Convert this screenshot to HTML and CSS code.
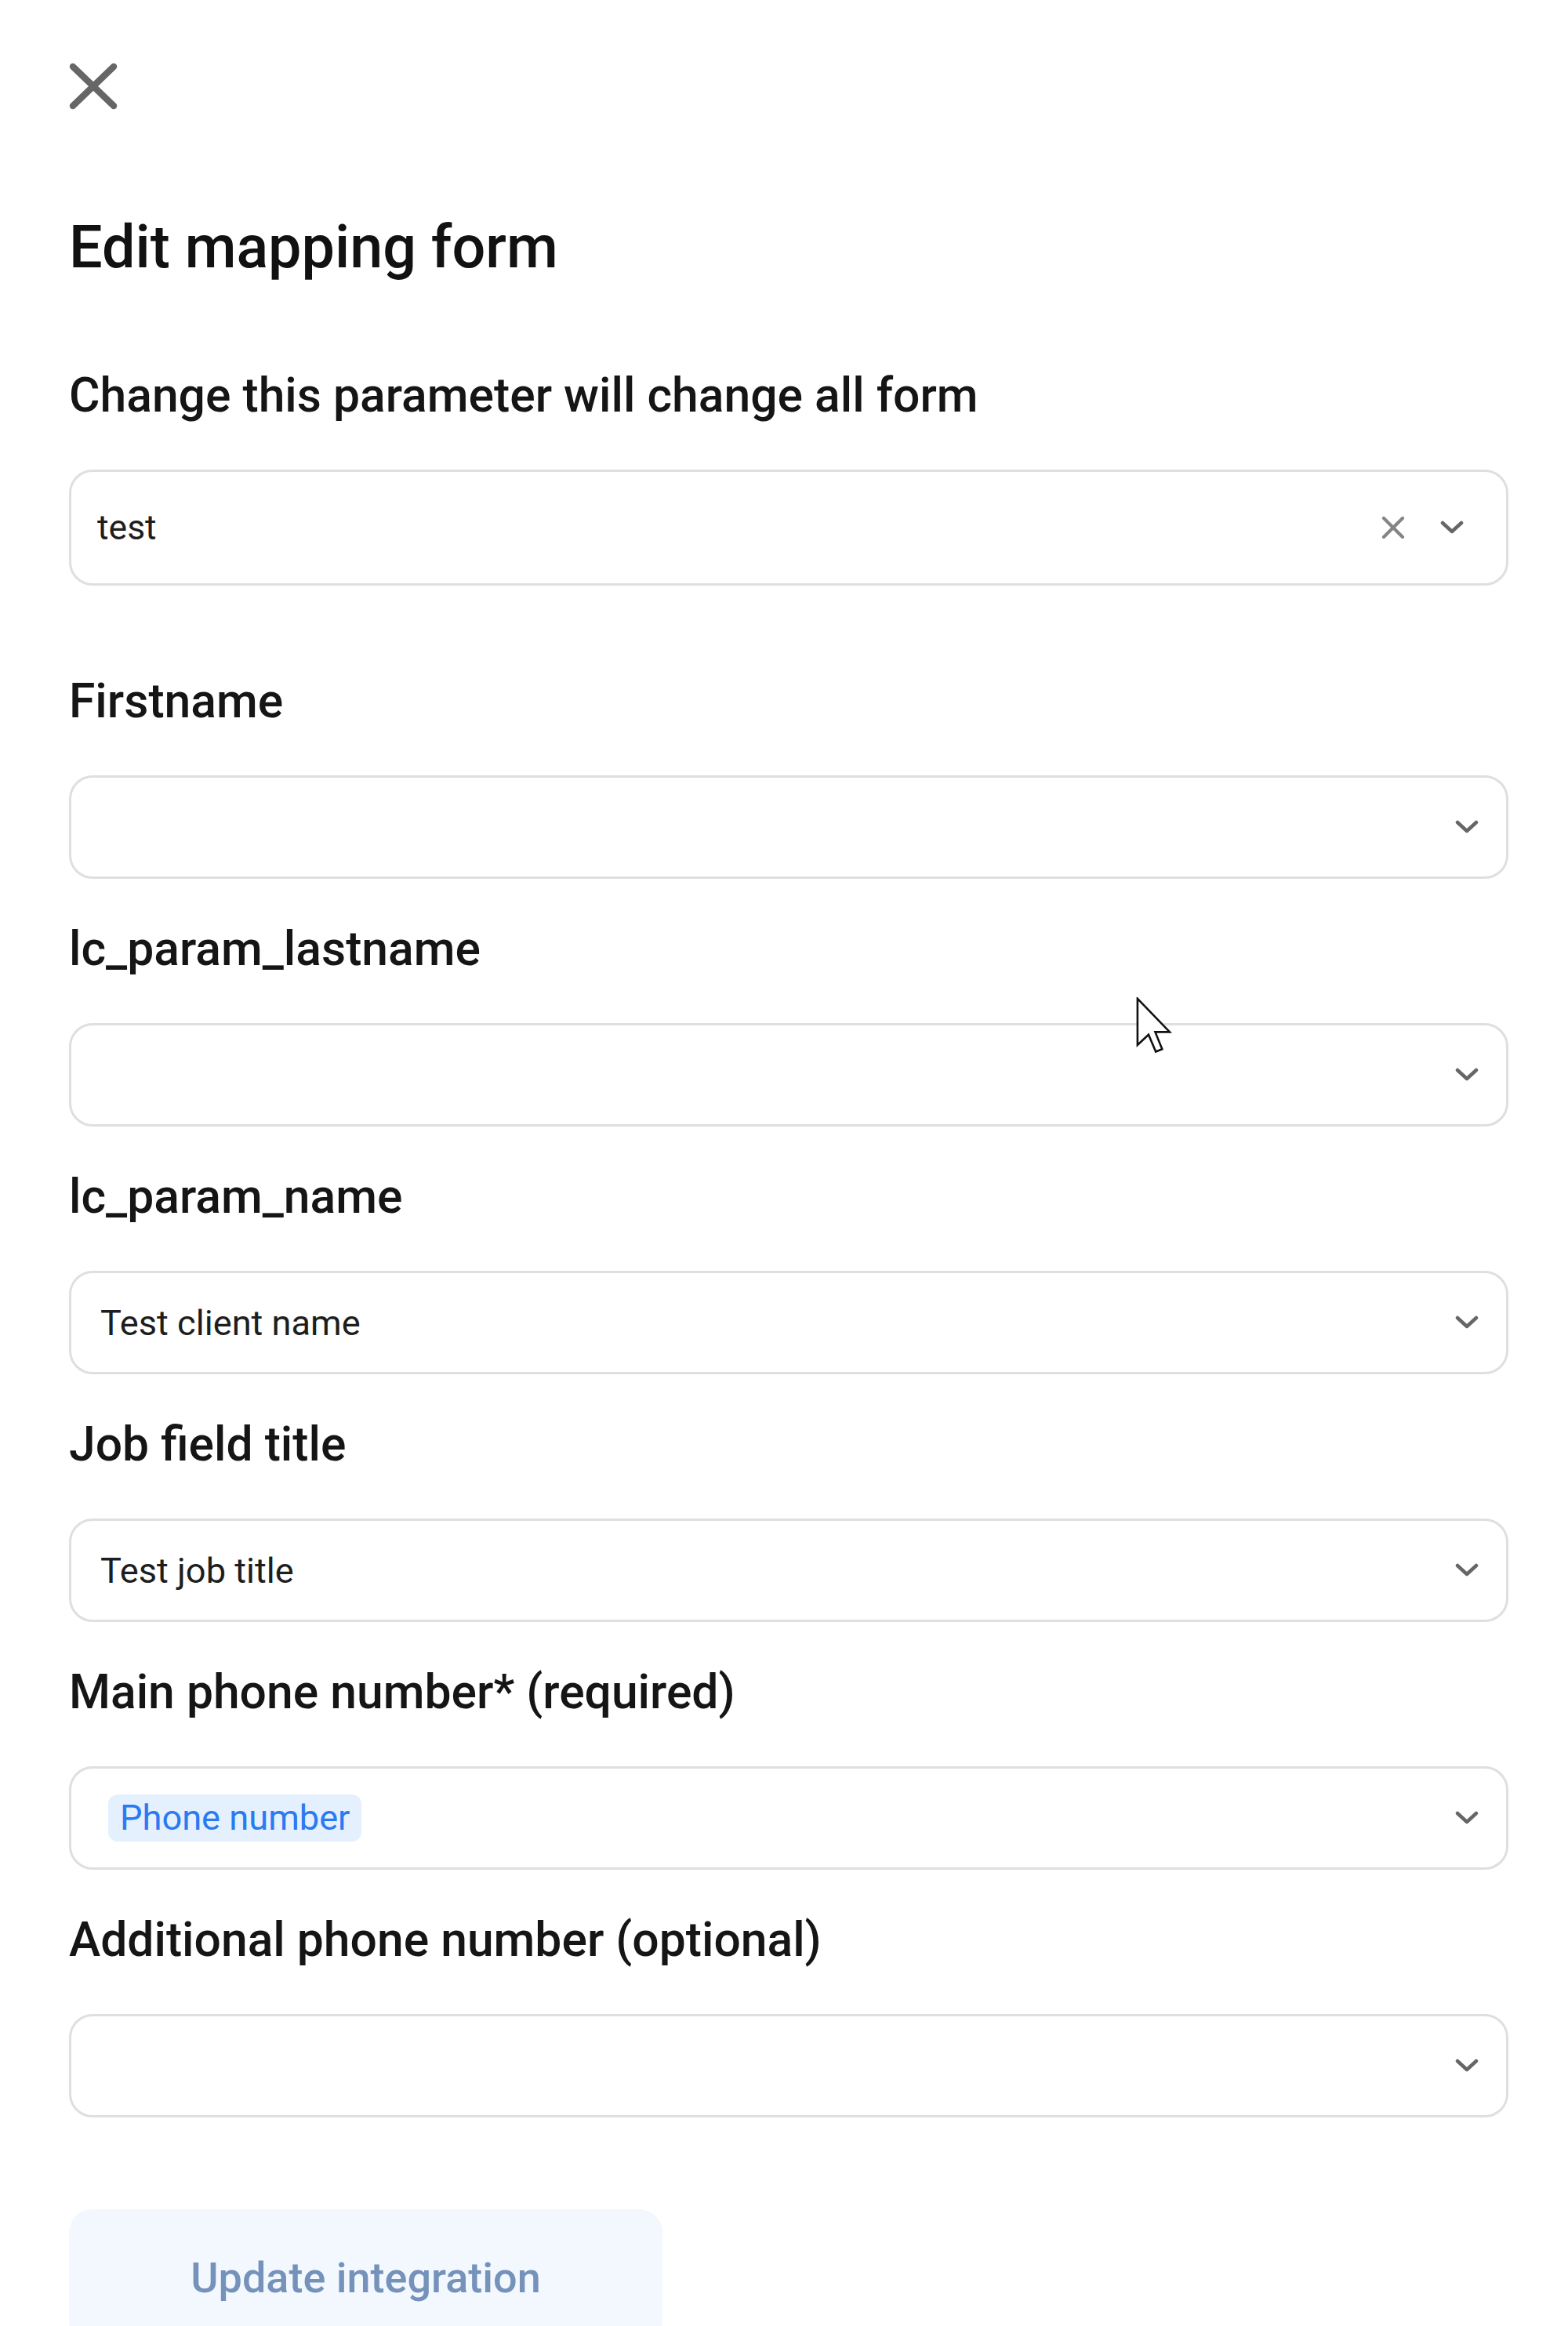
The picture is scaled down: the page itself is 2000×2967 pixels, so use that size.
FILE: index.html
```html
<!DOCTYPE html>
<html>
<head>
  <title>Edit mapping form</title>
  <link rel="stylesheet" href="styles.css">
</head>
<body>
  <div class="panel">
    <button class="close-btn" aria-label="Close">
      <svg width="62" height="60" viewBox="0 0 62 60"><path d="M5 5 L57 55 M57 5 L5 55" stroke="#666" stroke-width="8.5" stroke-linecap="round" fill="none"/></svg>
    </button>
    <h1>Edit mapping form</h1>

    <div class="field main-field">
      <label>Change this parameter will change all form</label>
      <div class="select select-big">
        <span class="value">test</span>
        <span class="clear">
          <svg width="30" height="30" viewBox="0 0 30 30"><path d="M3 3 L27 27 M27 3 L3 27" stroke="#858585" stroke-width="4.2" stroke-linecap="round" fill="none"/></svg>
        </span>
        <span class="chevron">
          <svg width="30" height="18" viewBox="0 0 30 18"><path d="M3 3 L15 14 L27 3" stroke="#666" stroke-width="4.5" stroke-linecap="round" stroke-linejoin="round" fill="none"/></svg>
        </span>
      </div>
    </div>

    <div class="fields">
      <div class="field">
        <label>Firstname</label>
        <div class="select">
          <span class="value"></span>
          <span class="chevron"><svg width="30" height="18" viewBox="0 0 30 18"><path d="M3 3 L15 14 L27 3" stroke="#666" stroke-width="4.5" stroke-linecap="round" stroke-linejoin="round" fill="none"/></svg></span>
        </div>
      </div>
      <div class="field">
        <label>lc_param_lastname</label>
        <div class="select">
          <span class="value"></span>
          <span class="chevron"><svg width="30" height="18" viewBox="0 0 30 18"><path d="M3 3 L15 14 L27 3" stroke="#666" stroke-width="4.5" stroke-linecap="round" stroke-linejoin="round" fill="none"/></svg></span>
        </div>
      </div>
      <div class="field">
        <label>lc_param_name</label>
        <div class="select">
          <span class="value">Test client name</span>
          <span class="chevron"><svg width="30" height="18" viewBox="0 0 30 18"><path d="M3 3 L15 14 L27 3" stroke="#666" stroke-width="4.5" stroke-linecap="round" stroke-linejoin="round" fill="none"/></svg></span>
        </div>
      </div>
      <div class="field">
        <label>Job field title</label>
        <div class="select">
          <span class="value">Test job title</span>
          <span class="chevron"><svg width="30" height="18" viewBox="0 0 30 18"><path d="M3 3 L15 14 L27 3" stroke="#666" stroke-width="4.5" stroke-linecap="round" stroke-linejoin="round" fill="none"/></svg></span>
        </div>
      </div>
      <div class="field">
        <label>Main phone number* (required)</label>
        <div class="select">
          <span class="value"><span class="tag">Phone number</span></span>
          <span class="chevron"><svg width="30" height="18" viewBox="0 0 30 18"><path d="M3 3 L15 14 L27 3" stroke="#666" stroke-width="4.5" stroke-linecap="round" stroke-linejoin="round" fill="none"/></svg></span>
        </div>
      </div>
      <div class="field">
        <label>Additional phone number (optional)</label>
        <div class="select">
          <span class="value"></span>
          <span class="chevron"><svg width="30" height="18" viewBox="0 0 30 18"><path d="M3 3 L15 14 L27 3" stroke="#666" stroke-width="4.5" stroke-linecap="round" stroke-linejoin="round" fill="none"/></svg></span>
        </div>
      </div>
    </div>

    <button class="submit-btn">Update integration</button>
  </div>

  <!-- mouse pointer captured in the screenshot -->
  <svg class="cursor" width="46" height="74" viewBox="0 0 12.4 20"><path d="M0.5 0.5 L0.5 16.5 L4.3 12.9 L6.8 18.8 L9 17.9 L6.6 12 L11.6 12 Z" fill="#fff" stroke="#111" stroke-width="0.7" stroke-linejoin="miter"/></svg>
</body>
</html>
```

FILE: styles.css
```css
html, body { overflow: hidden; }
body { margin: 0; font-family: Roboto, "Liberation Sans", sans-serif; background: #fff; color: #111; position: relative; }

.panel { padding: 80px 76px 0 88px; }

.close-btn { display: block; width: 62px; height: 60px; padding: 0; border: none; background: none; cursor: pointer; }
.close-btn svg { display: block; }

h1 { margin: 131px 0 0; font-size: 75.5px; font-weight: 500; line-height: 88px; color: #111; }

.field label { display: block; font-size: 60.6px; font-weight: 500; line-height: 72px; margin-bottom: 58px; color: #151515; }
.main-field { margin-top: 110px; }

.select { height: 132px; box-sizing: border-box; border: 3px solid #dfdfdf; border-radius: 30px; display: flex; align-items: center; padding: 0 35px 0 37px; font-size: 45.2px; color: #1e1e1e; }
.select .value { flex: 1; }
.select .chevron, .select .clear { display: flex; }
.select-big { height: 148px; padding: 0 54px 0 33px; font-size: 44.5px; }
.select-big .clear { margin-right: 45px; }

.tag { display: inline-block; margin-left: 10px; padding: 0 15px; height: 60px; line-height: 60px; background: #e5f0ff; color: #2a7af2; border-radius: 12px; }

.fields { margin-top: 112px; display: flex; flex-direction: column; gap: 54px; }

.submit-btn { display: block; margin-top: 117px; width: 757px; height: 174px; border: none; border-radius: 30px; background: #f3f8fe; color: #7592bb; font-family: Roboto, "Liberation Sans", sans-serif; font-size: 54px; font-weight: 500; }

.cursor { position: absolute; left: 1449px; top: 1272px; }
```
